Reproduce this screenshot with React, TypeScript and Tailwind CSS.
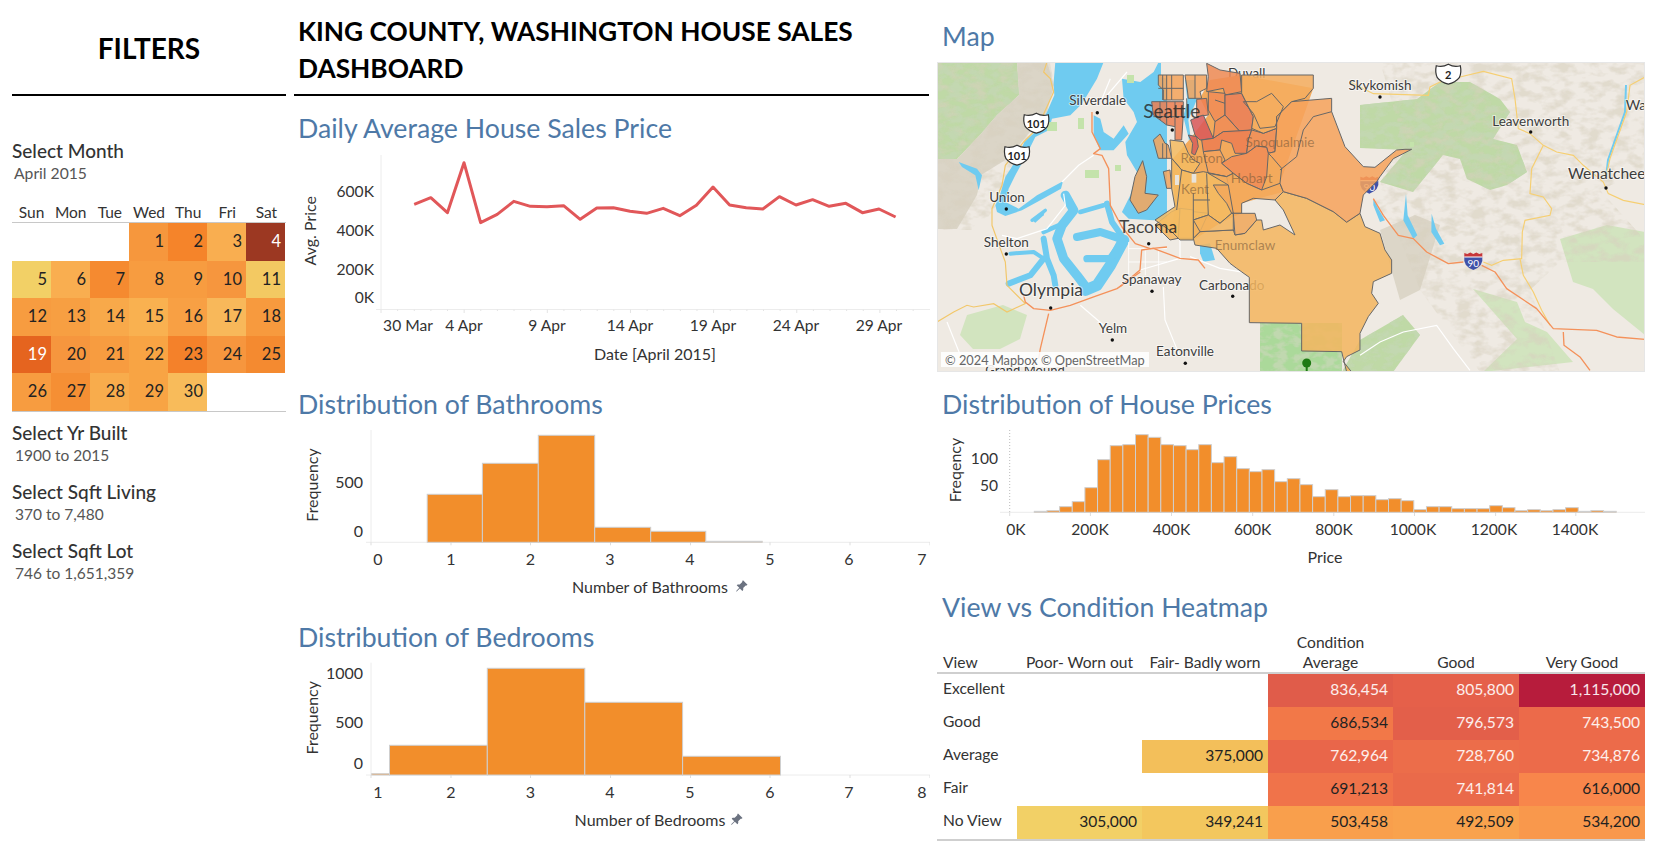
import { BsPinAngleFill } from "react-icons/bs";
import type { ReactNode } from "react";

const calendar = [
  [null, null, null, { d: 1, c: "bg-[#f6973d]" }, { d: 2, c: "bg-[#f5842a]" }, { d: 3, c: "bg-[#f9ae50]" }, { d: 4, c: "bg-[#9c3822] text-white" }],
  [{ d: 5, c: "bg-[#f2d066]" }, { d: 6, c: "bg-[#f9ae50]" }, { d: 7, c: "bg-[#f58a30]" }, { d: 8, c: "bg-[#f79c40]" }, { d: 9, c: "bg-[#f79c40]" }, { d: 10, c: "bg-[#f6963e]" }, { d: 11, c: "bg-[#f3c962]" }],
  [{ d: 12, c: "bg-[#f79c40]" }, { d: 13, c: "bg-[#f79f42]" }, { d: 14, c: "bg-[#f8a94a]" }, { d: 15, c: "bg-[#f9b150]" }, { d: 16, c: "bg-[#f8a044]" }, { d: 17, c: "bg-[#f8b85a]" }, { d: 18, c: "bg-[#f79a3e]" }],
  [{ d: 19, c: "bg-[#e5641f] text-white" }, { d: 20, c: "bg-[#f6963e]" }, { d: 21, c: "bg-[#f79c40]" }, { d: 22, c: "bg-[#f8a444]" }, { d: 23, c: "bg-[#f4812a]" }, { d: 24, c: "bg-[#f6963e]" }, { d: 25, c: "bg-[#f48a30]" }],
  [{ d: 26, c: "bg-[#f79c40]" }, { d: 27, c: "bg-[#f58f34]" }, { d: 28, c: "bg-[#f8ac4c]" }, { d: 29, c: "bg-[#f8a444]" }, { d: 30, c: "bg-[#f8bb5a]" }, null, null],
];

const heatRows = [
  { label: "Excellent", cells: [null, null, { v: "836,454", c: "bg-[#e05c4a] text-white/90" }, { v: "805,800", c: "bg-[#e5604a] text-white/90" }, { v: "1,115,000", c: "bg-[#b71c3c] text-white/90" }] },
  { label: "Good", cells: [null, null, { v: "686,534", c: "bg-[#f27848]" }, { v: "796,573", c: "bg-[#e35f4a] text-white/90" }, { v: "743,500", c: "bg-[#ec6a4a] text-white/90" }] },
  { label: "Average", cells: [null, { v: "375,000", c: "bg-[#f3bf5a]" }, { v: "762,964", c: "bg-[#e9664a] text-white/90" }, { v: "728,760", c: "bg-[#ec6d4a] text-white/90" }, { v: "734,876", c: "bg-[#ec6b4a] text-white/90" }] },
  { label: "Fair", cells: [null, null, { v: "691,213", c: "bg-[#f0734a]" }, { v: "741,814", c: "bg-[#ea6a4a] text-white/90" }, { v: "616,000", c: "bg-[#f8864b]" }] },
  { label: "No View", cells: [{ v: "305,000", c: "bg-[#f2d066]" }, { v: "349,241", c: "bg-[#f3c75e]" }, { v: "503,458", c: "bg-[#f99f4c]" }, { v: "492,509", c: "bg-[#f9a24d]" }, { v: "534,200", c: "bg-[#f9984c]" }] },
];

const priceLine = [313, 293, 338, 188, 368, 343, 304, 319, 320, 317, 358, 324, 323, 334, 340, 325, 347, 316, 261, 315, 323, 327, 290, 315, 299, 319, 310, 338, 327, 351];

const priceBins = [394, 392, 380, 365, 323, 239, 197, 194, 164, 172, 194, 197, 209, 194, 248, 230, 266, 275, 269, 305, 296, 314, 350, 329, 350, 347, 347, 359, 356, 362, 389, 380, 380, 386, 386, 386, 377, 383, 392, 389, 392, 389, 383, 394, 392, 394];

function Title({ children }: { children: ReactNode }) {
  return <div className="h-[32px] leading-[32px] text-[26.7px] text-[#4e79a7] whitespace-nowrap">{children}</div>;
}

function T({ x, y, children, anchor = "middle", size = 15.6, fill = "#333", rotate = false }: { x: number; y: number; children: ReactNode; anchor?: "start" | "middle" | "end"; size?: number; fill?: string; rotate?: boolean }) {
  const tx = rotate ? x - 1.5 : x;
  const ty = rotate ? y : y - 1.5;
  return (
    <text x={tx} y={ty} textAnchor={anchor} dominantBaseline="central" fontSize={size} fill={fill} transform={rotate ? `rotate(-90 ${tx} ${ty})` : undefined}>
      {children}
    </text>
  );
}

function FilterBlock({ name, value }: { name: string; value: string }) {
  return (
    <div className="h-[59px]">
      <div className="h-[22px] leading-[22px] text-[19px] font-medium text-[#333]">{name}</div>
      <div className="h-[22px] leading-[22px] text-[15.5px] text-[#555] pl-[3px]">{value}</div>
    </div>
  );
}

function Bar({ x1, x2, top, bottom }: { x1: number; x2: number; top: number; bottom: number }) {
  return <rect x={x1} y={top} width={x2 - x1} height={bottom - top} fill="#f28e2b" stroke="#cfcfcf" strokeWidth={1} />;
}

function Histogram({ y0, y1, edges, tops, xLabels, yLabels, name, nameX, pinX, nameY, labelY, freqY }: { y0: number; y1: number; edges: number[]; tops: number[]; xLabels: [string, number, number][]; yLabels: [string, number][]; name: string; nameX: number; pinX: number; nameY: number; labelY: number; freqY: number }) {
  return (
    <>
      <line x1={371} x2={371} y1={y0} y2={y1} stroke="#ececec" />
      <line x1={366} x2={930} y1={y1} y2={y1} stroke="#ececec" />
      {xLabels.map(([l, lx, tx]) => (
        <g key={l}>
          <line x1={tx} x2={tx} y1={y1} y2={y1 + 3} stroke="#ddd" />
          <T x={lx} y={labelY} size={16}>{l}</T>
        </g>
      ))}
      {yLabels.map(([l, ly]) => (
        <T key={l} x={363} y={ly} anchor="end" size={16}>{l}</T>
      ))}
      {tops.map((t, i) => (
        <Bar key={i} x1={edges[i]} x2={edges[i + 1]} top={t} bottom={y1} />
      ))}
      <T x={313} y={freqY} rotate size={16}>Frequency</T>
      <T x={nameX} y={nameY} size={16}>{name}</T>
      <BsPinAngleFill x={pinX} y={nameY - 8} size={13} className="text-[#6b7280]" />
    </>
  );
}

function Shield({ x, y, label }: { x: number; y: number; label: string }) {
  return (
    <g>
      <path d={`M${x - 12} ${y - 8} q6 2 12 -1.5 q6 3.5 12 1.5 q1.5 7 -1 12 q-4 5 -11 6.5 q-7 -1.5 -11 -6.5 q-2.5 -5 -1 -12z`} fill="#fff" stroke="#333" strokeWidth={1.2} />
      <text x={x} y={y + 1} textAnchor="middle" dominantBaseline="central" fontSize={11} fontWeight={700} fill="#222">{label}</text>
    </g>
  );
}

function Interstate({ x, y }: { x: number; y: number }) {
  return (
    <g>
      <path d={`M${x - 9} ${y - 4} h18 q1.5 9 -9 13 q-10.5 -4 -9 -13z`} fill="#3f51a8" />
      <path d={`M${x - 9} ${y - 4} v-4 l3 1 l3 -1.5 l3 1.5 l3 -1.5 l3 1.5 l3 -1 v4z`} fill="#c6363a" />
      <line x1={x - 9} x2={x + 9} y1={y - 4} y2={y - 4} stroke="#fff" />
      <text x={x} y={y + 2} textAnchor="middle" dominantBaseline="central" fontSize={10} fill="#fff">90</text>
    </g>
  );
}

function MapLabel({ x, y, children, size = 13.5 }: { x: number; y: number; children: ReactNode; size?: number }) {
  return (
    <text x={x} y={y} textAnchor="middle" dominantBaseline="central" fontSize={size} fill="#3d3d3d" stroke="#fff" strokeWidth={2} strokeOpacity={0.55} paintOrder="stroke">
      {children}
    </text>
  );
}

// labels that sit under the county shading in the picture, so they read faint
function FaintLabel({ x, y, children }: { x: number; y: number; children: ReactNode }) {
  return (
    <text x={x} y={y} textAnchor="middle" dominantBaseline="central" fontSize={13.5} fill="#7a5a3a" fillOpacity={0.6}>
      {children}
    </text>
  );
}

const westGroup = "translate(937 62) scale(0.3333)";
const northGroup = "translate(1100 60) scale(0.3333)";
const southGroup = "translate(1120 170) scale(0.3333)";
const eastGroup = "translate(1360 62) scale(0.3333)";

function MapPanel() {
  const dots = [[1097.3, 112.7], [1006.3, 209], [1006.3, 254], [1148.7, 243.7], [1050.7, 308], [1112.3, 340], [1152, 291.3], [1232.7, 296.3], [1185.3, 363.3], [1380, 97], [1530.7, 132], [1606, 188], [1172.3, 130], [1199.3, 170.7]];
  return (
    <svg viewBox="937 62 708 310" className="block w-[708px] h-[310px]">
      <defs>
        <filter id="tan" x="0" y="0" width="100%" height="100%">
          <feTurbulence type="fractalNoise" baseFrequency="0.07 0.11" numOctaves="3" seed="11" />
          <feColorMatrix values="0 0 0 0 0.68 0 0 0 0 0.63 0 0 0 0 0.52 3.4 0 0 0 -1.45" />
        </filter>
        <filter id="ridge" x="0" y="0" width="100%" height="100%">
          <feTurbulence type="fractalNoise" baseFrequency="0.08 0.13" numOctaves="3" seed="4" />
          <feColorMatrix values="0 0 0 0 0.55 0 0 0 0 0.68 0 0 0 0 0.45 4.5 0 0 0 -1.95" />
        </filter>
        <clipPath id="rough">
          <polygon points="937,62 1050,62 1055,90 1030,145 1006,190 980,230 937,230" />
          <polygon points="1380,62 1645,62 1645,170 1600,190 1645,240 1645,262 1560,262 1530,290 1560,372 1480,372 1420,290 1400,240 1375,200 1400,130" />
        </clipPath>
        <clipPath id="forest">
          <polygon points="937,62 1017,62 1019,95 997,115 980,135 957,159 937,159" />
          <polygon points="1360,105 1417,99 1440,82 1470,82 1500,99 1510,112 1493,139 1517,145 1527,172 1507,185 1490,190 1467,179 1460,159 1443,155 1413,192 1380,182 1407,150 1360,148" />
          <polygon points="1342,372 1360,340 1403,315 1420,335 1393,372" />
          <polygon points="1260,323 1342,323 1342,372 1260,372" />
        </clipPath>
      </defs>
      <rect x={937} y={62} width={708} height={310} fill="#efeae3" />
      <g fill="#bfd9a6">
        <polygon points="937,62 1017,62 1019,95 997,115 980,135 957,159 937,159" />
        <polygon points="1360,105 1417,99 1440,82 1470,82 1500,99 1510,112 1493,139 1517,145 1527,172 1507,185 1490,190 1467,179 1460,159 1443,155 1413,192 1380,182 1407,150 1360,148" />
      </g>
      <g fill="#d2e4bf">
        <polygon points="967,315 1003,305 1027,315 1020,339 1000,349 973,349 960,335" />
        <polygon points="1473,289 1517,302 1525,322 1547,332 1573,362 1483,372 1517,339" />
        <polygon points="1560,239 1607,225 1645,232 1645,335 1613,309 1593,289 1573,282" />
      </g>
      <polygon points="1342,372 1360,340 1403,315 1420,335 1393,372" fill="#bfd9a6" />
      <polygon points="1260,323 1342,323 1342,372 1260,372" fill="#abd99a" />
      <polygon points="1380,230 1415,215 1440,225 1420,290 1400,300" fill="#dcd6c8" />
      <polygon points="1017,62 1047,62 1054,85 1047,112 1024,139 1007,159 981,175 977,195 957,229 937,229 937,159 957,159 980,135 997,115 1019,95" fill="#dbd5c7" />
      <rect x={937} y={62} width={708} height={310} filter="url(#tan)" clipPath="url(#rough)" opacity={0.6} />
      <rect x={937} y={62} width={708} height={310} filter="url(#ridge)" clipPath="url(#forest)" opacity={0.85} />

      {/* water */}
      <g fill="#6fcbf0">
        <g transform={westGroup}>
          <path d="M355 0 L500 0 L480 50 L435 125 L400 160 L345 170 L335 205 L295 225 L270 275 L235 340 L215 380 L205 420 L245 440 L300 400 L378 358 L372 380 L310 415 L255 445 L205 462 L180 450 L175 430 L190 395 L205 345 L240 290 L262 240 L300 205 L330 150 L352 100 L350 60 Z" />
          <polygon points="470,160 490,170 500,210 530,230 560,190 575,215 530,265 490,265 470,220" />
          <polygon points="555,50 610,60 650,30 665,0 672,0 672,45 690,50 690,470 650,475 575,470 555,450 580,400 600,330 570,280 565,240 600,180 590,150 560,110" />
          <polygon points="65,300 120,320 135,340 125,385 115,340 75,315" />
          <polygon points="285,475 325,445 320,460 295,482" />
        </g>
        <g transform={southGroup}>
          <polygon points="240,225 270,220 285,270 250,275 240,250" />
        </g>
        <g transform={eastGroup}>
          <polygon points="138,395 143,460 172,520 160,530 130,475" />
          <polygon points="215,455 228,500 253,545 240,550 214,510" />
          <polygon points="40,410 55,440 75,475 60,480 40,430" />
        </g>
      </g>
      <g fill="none" stroke="#6fcbf0" strokeLinecap="round" strokeLinejoin="round" transform={westGroup}>
        <path d="M560 535 L520 610 L480 670 L445 685" strokeWidth={34} />
        <path d="M510 425 L525 480 L560 530" strokeWidth={18} />
        <path d="M385 400 L410 445 L375 490 L360 530 L380 590 L420 640 L450 680" strokeWidth={28} />
        <path d="M320 510 L365 490" strokeWidth={14} />
        <path d="M320 530 L330 590 L350 640 L355 670" strokeWidth={18} />
        <path d="M220 575 L290 570 L320 590" strokeWidth={12} />
        <path d="M215 665 L280 640 L320 590" strokeWidth={18} />
        <path d="M420 525 L490 510 L550 530" strokeWidth={24} />
        <path d="M450 590 L520 590 L555 540" strokeWidth={22} />
        <path d="M430 450 L500 430" strokeWidth={14} />
        <path d="M285 475 L325 445" strokeWidth={10} />
      </g>
      <g fill="#6fcbf0" transform={northGroup}>
        <polygon points="255,60 285,60 290,120 265,180 272,235 300,310 280,320 265,230 250,170 262,120" />
      </g>
      <g fill="none" stroke="#6fcbf0" strokeWidth={2}>
        <path d="M1626 85 L1625 112 L1608 160 L1606 178" />
      </g>

      {/* green patches */}
      <g fill="#c4e3ab">
        <rect x={1047} y={122} width={10} height={9} />
        <rect x={1078} y={118} width={6} height={11} />
        <rect x={1085} y={170} width={14} height={8} />
        <rect x={1127} y={75} width={7} height={8} />
        <rect x={1115} y={165} width={6} height={6} />
        <rect x={1410} y={142} width={4} height={5} />
      </g>

      {/* roads */}
      <g fill="none" stroke="#fff" strokeWidth={3.5} transform={westGroup}>
        <path d="M375 360 L425 310 L470 280 M380 395 L385 430 L330 500 L240 530 L195 520 M510 100 L570 30" />
        <path d="M30 780 L70 880" />
        <path d="M575 560 L690 560 M575 600 L690 600 M575 540 L575 640 M625 560 L625 640 M665 560 L665 640" strokeWidth={2.5} />
        <path d="M430 730 L500 790 M520 50 L495 110" />
      </g>
      <g fill="none" stroke="#fff" strokeWidth={3.5} transform={southGroup}>
        <path d="M130 350 L135 450 L180 560 M210 260 L300 295 L390 310 M180 210 L180 270 M60 300 L180 265" />
      </g>
      <g fill="none" stroke="#fff" strokeWidth={3.5} transform={eastGroup}>
        <path d="M0 880 L60 840 L130 810 L230 790 L280 860 L330 925" />
      </g>
      <g fill="none" stroke="#f2c76a" strokeWidth={3.5} transform={westGroup}>
        <path d="M0 780 L50 750 L90 730 L110 735 L170 725 L210 750 L265 725 L210 670 L205 600 L190 560 L165 490 L165 440 L195 370 L205 310 L260 240 L300 200 L350 90 L340 50 L320 30 L330 0" />
      </g>
      <g fill="none" stroke="#f6cf72" strokeWidth={3.5} transform={eastGroup}>
        <path d="M-30 60 L40 95 L205 100 L210 75 L240 60 L300 45 L370 28 L455 50 L465 110 L475 200 L510 215 L550 250 L590 270 L640 280 L670 310 L730 360 L745 395 L790 415 L855 428" />
        <path d="M550 250 L515 320 L510 395 L550 405 L575 440 L570 460 L495 475 L487 510 L485 590 L430 595 L395 610 L370 600" />
        <path d="M480 590 L490 640 L520 690 L545 745 L570 790" />
        <path d="M855 45 L810 70 L800 150 L750 290 L738 345" />
      </g>
      <g fill="none" stroke="#f4915a" strokeWidth={4} strokeLinejoin="round" transform={westGroup}>
        <path d="M465 150 L465 210 L490 260 L470 275 L495 280 L515 320 L520 430 L555 495 L595 545 L640 560 L690 555" />
        <path d="M610 630 L540 680 L470 705 L400 730 L340 745 L290 740 L265 720 L260 700" />
        <path d="M335 755 L310 860 L305 890" />
      </g>
      <g fill="none" stroke="#f4915a" strokeWidth={4} strokeLinejoin="round" transform={southGroup}>
        <path d="M0 350 L60 300 L65 240 L100 235 L180 265 L235 270 L255 295" />
      </g>
      <g fill="none" stroke="#f4915a" strokeWidth={4} strokeLinejoin="round" transform={eastGroup}>
        <path d="M40 410 L70 460 L115 520 L160 530 L200 570 L265 605 L310 600" />
        <path d="M365 610 L405 630 L440 680 L530 740 L580 800 L710 805 L770 825 L855 832" />
        <path d="M610 810 L612 850 L660 885 L690 925" />
      </g>

      {dots.map(([x, y], i) => (
        <circle key={i} cx={x} cy={y} r={1.7} fill="#111" />
      ))}
      <MapLabel x={1097.7} y={100}>Silverdale</MapLabel>
      <MapLabel x={1246.7} y={73.3}>Duvall</MapLabel>
      <MapLabel x={1380} y={84.7}>Skykomish</MapLabel>
      <MapLabel x={1530.7} y={120.7}>Leavenworth</MapLabel>
      <MapLabel x={1606.7} y={173} size={15.5}>Wenatchee</MapLabel>
      <MapLabel x={1636} y={104} size={14}>Wa</MapLabel>
      <MapLabel x={1007} y={197}>Union</MapLabel>
      <MapLabel x={1006.3} y={242}>Shelton</MapLabel>
      <MapLabel x={1051} y={289.3} size={17.5}>Olympia</MapLabel>
      <MapLabel x={1113} y={328}>Yelm</MapLabel>
      <MapLabel x={1151.7} y={279}>Spanaway</MapLabel>
      <MapLabel x={1231.7} y={284.7}>Carbonado</MapLabel>
      <MapLabel x={1185} y={351}>Eatonville</MapLabel>
      <MapLabel x={1025} y={370} size={13}>Grand Mound</MapLabel>
      <Shield x={1036.3} y={122.7} label="101" />
      <Shield x={1017} y={154.7} label="101" />
      <Shield x={1448.3} y={73.7} label="2" />
      <Interstate x={1369.3} y={184.7} />
      <Interstate x={1473.3} y={261} />

      {/* county tracts */}
      <g stroke="#666" strokeWidth={3} strokeLinejoin="round" fillOpacity={0.86}>
        <g transform={northGroup}>
          <polygon fill="#f3aa5c" stroke="none" fillOpacity={1} points="300,115 330,60 425,45 640,85 540,370 550,395 425,430 425,460 400,470 360,490 280,540 240,540 215,515 225,440 215,300 272,235 325,165" />
        </g>
        <g transform={southGroup}>
          <polygon fill="#f3b65f" points="490,65 560,85 640,125 680,155 720,130 735,170 780,190 795,240 815,270 815,310 760,335 755,370 775,400 745,440 720,490 720,540 680,560 670,575 695,606 680,606 665,545 545,543 545,460 388,458 388,322 350,295 330,280 290,235 225,225 220,205 240,185 340,180 345,195 375,190 410,150 425,150 430,180 480,165 525,195 490,120 465,90" />
          <polygon fill="#f3b660" points="105,165 155,125 180,115 175,205 150,210" />
          <polygon fill="#f4bd62" points="180,115 220,120 220,205 175,205" />
          <polygon fill="#f3b45e" points="220,125 265,130 240,185 220,205" />
        </g>
        <g transform={northGroup}>
          <polygon fill="#f3a45c" points="175,45 250,45 250,120 215,120 190,120 190,90 175,75" />
          <polygon fill="#f5a55e" points="255,45 320,45 320,85 300,95 305,115 265,115 262,90" />
          <polygon fill="#ec7f52" points="155,125 250,125 250,165 245,240 225,240 225,200 200,195 160,165" />
          <polygon fill="#ee7f52" points="290,118 320,115 325,165 290,170" />
          <polygon fill="#d9585a" points="272,180 310,165 340,235 300,240 285,225" />
          <polygon fill="#d9605a" points="265,225 290,230 295,260 285,285 275,280 278,250" />
          <polygon fill="#ef8c56" points="320,10 360,30 420,40 425,95 375,105 370,85 320,95 325,50" />
          <polygon fill="#f08c56" points="325,95 375,100 375,165 345,185 325,150" />
          <polygon fill="#e97f58" points="375,105 425,100 460,170 455,210 420,215 375,165" />
          <polygon fill="#ef8c56" points="345,185 375,165 420,215 370,215 340,235" />
          <polygon fill="#ec7e52" points="305,240 340,235 370,215 455,210 445,240 440,280 405,280 395,250 365,240 360,270 310,275" />
          <polygon fill="#ef8f5a" points="455,210 490,220 530,205 525,275 505,280 500,262 470,258 440,280 445,240" />
          <polygon fill="#f08c56" points="365,310 395,290 440,280 470,258 500,262 505,280 500,350 485,390 440,370 400,340" />
          <polygon fill="#f4a35d" points="310,275 360,270 375,300 365,310 400,340 380,350 325,340" />
          <polygon fill="#f3a45c" points="160,240 180,222 195,250 205,255 215,295 175,295" />
          <polygon fill="#f3bb62" points="210,240 250,245 265,280 280,300 300,310 280,340 245,330 215,295" />
          <polygon fill="#f3a45c" points="190,335 210,330 215,385 200,385" />
          <polygon fill="#f3bb62" points="215,295 245,330 280,340 310,335 380,350 385,375 340,375 355,400 380,430 395,460 360,490 325,465 280,480 280,540 240,540 215,515 165,480 225,440 215,385" />
          <polygon fill="#f3aa5c" points="325,340 380,350 400,340 440,370 485,390 540,370 550,395 525,420 460,415 425,430 425,460 400,460 385,375" />
          <polygon fill="#f3b45e" points="325,465 360,490 395,460 400,460 400,510 300,515 280,480" />
          <polygon fill="#f0a65a" points="395,460 465,460 470,480 435,520 405,525 400,460" />
          <polygon fill="#f4ae5f" points="425,45 640,45 640,85 615,115 575,125 530,170 530,205 490,220 455,205 460,170 425,100" />
          <polygon fill="#f6a35c" points="530,205 530,170 575,125 695,115 695,155 735,260 790,320 825,322 890,270 915,268 935,268 880,296 840,350 830,365 790,405 780,460 740,487 700,455 620,415 550,395 540,370 545,325 515,290 505,280 525,275" />
          <polygon fill="#f3a55c" points="128,302 140,350 135,400 175,405 140,450 115,460 90,420 105,350" />
          <g fill="none">
            <path d="M188 45 V120 M200 45 V120 M215 45 V120 M285 45 V115 M175 85 H250 M180 125 V180 M200 125 V195 M225 125 V200 M160 170 H250" />
            <path d="M695 155 L640 170 L610 210 L590 290 L540 330" />
            <path d="M188 250 V295 M200 250 V295 M245 330 L230 450 M280 400 V480 M280 420 H330 M320 340 L325 465" />
            <path d="M430 125 L470 125 L515 100 L550 140 L525 200 L480 205 L460 160 L430 125" />
            <path d="M260 115 L262 175 M345 120 L375 130" />
          </g>
          <g fill="#e8e4dc" stroke="none" fillOpacity={1}>
            <rect x={225} y={345} width={12} height={30} />
            <rect x={275} y={342} width={14} height={26} />
          </g>
        </g>
      </g>
      <FaintLabel x={1245} y={245}>Enumclaw</FaintLabel>
      <FaintLabel x={1251.7} y={178}>Hobart</FaintLabel>
      <FaintLabel x={1201.7} y={158}>Renton</FaintLabel>
      <FaintLabel x={1195} y={189}>Kent</FaintLabel>
      <FaintLabel x={1280} y={142}>Snoqualmie</FaintLabel>
      <text x={1171.7} y={110} textAnchor="middle" dominantBaseline="central" fontSize={19} fill="#222" fillOpacity={0.8}>Seattle</text>
      <text x={1148} y={226} textAnchor="middle" dominantBaseline="central" fontSize={17.5} fill="#222" fillOpacity={0.85}>Tacoma</text>
      <g>
        <circle cx={1306.7} cy={363} r={4.5} fill="#1f7a14" />
        <rect x={1305.7} y={365} width={2} height={7} fill="#1f7a14" />
      </g>
      <rect x={941} y={352} width={208} height={15} fill="#fff" fillOpacity={0.88} />
      <text x={945} y={359.5} dominantBaseline="central" fontSize={12.8} fill="#666">© 2024 Mapbox © OpenStreetMap</text>
      <rect x={937.5} y={62.5} width={707} height={309} fill="none" stroke="#e6e6e6" />
    </svg>
  );
}

export default function App() {
  const xBath: [string, number, number][] = [["0", 378, 371], ["1", 451, 451], ["2", 530.5, 530.5], ["3", 610, 610.5], ["4", 690, 690.5], ["5", 770, 770], ["6", 849, 850], ["7", 922, 930]];
  const xBed: [string, number, number][] = [["1", 378, 371], ["2", 451, 451], ["3", 530.5, 530.5], ["4", 610, 610.5], ["5", 690, 690.5], ["6", 770, 770], ["7", 849, 850], ["8", 922, 930]];

  return (
    <div className="flex w-[1657px] h-[851px] overflow-hidden bg-white font-[Lato,'Noto_Sans',sans-serif] text-[#333]">
      {/* filters */}
      <div className="ml-[12px] w-[274px] flex flex-col">
        <div className="h-[96px] border-b-2 border-black flex items-center justify-center pt-[2px]">
          <span className="text-[28px] font-bold text-black">FILTERS</span>
        </div>
        <div className="mt-[44px] h-[22px] leading-[22px] text-[19px] font-medium">Select Month</div>
        <div className="h-[23px] leading-[23px] text-[15.7px] text-[#555] pl-[2px]">April 2015</div>
        <div className="mt-[15px] h-[23px] pt-[2px] grid grid-cols-7 border-b border-[#c8c8c8] text-[15.5px] text-center leading-[20px] w-[274px]">
          {["Sun", "Mon", "Tue", "Wed", "Thu", "Fri", "Sat"].map((d) => (
            <div key={d}>{d}</div>
          ))}
        </div>
        <div className="grid grid-cols-[repeat(7,39px)] auto-rows-[37.5px] border-b border-[#c8c8c8] text-[16.5px] text-[#222]">
          {calendar.flat().map((cell, i) =>
            cell ? (
              <div key={i} className={`flex items-center justify-end pr-[4px] ${cell.c}`}>
                {cell.d}
              </div>
            ) : (
              <div key={i} />
            ),
          )}
        </div>
        <div className="mt-[10px]">
          <FilterBlock name="Select Yr Built" value="1900 to 2015" />
          <FilterBlock name="Select Sqft Living" value="370 to 7,480" />
          <FilterBlock name="Select Sqft Lot" value="746 to 1,651,359" />
        </div>
      </div>

      {/* middle */}
      <div className="ml-[8px] w-[635px] mr-[1px] flex flex-col">
        <div className="h-[96px] border-b-2 border-black pl-[4px] pt-[13px] text-[26.3px] leading-[37px] font-bold text-black">
          KING COUNTY, WASHINGTON HOUSE SALES
          <br />
          DASHBOARD
        </div>
        <div className="mt-[16px] pl-[4px]">
          <Title>Daily Average House Sales Price</Title>
        </div>
        <svg viewBox="294 144 636 226" className="block w-[636px] h-[226px] shrink-0">
          <line x1={381} x2={381} y1={155} y2={309.5} stroke="#ececec" />
          <line x1={376} x2={930} y1={309.5} y2={309.5} stroke="#ececec" />
          {Array.from({ length: 33 }, (_, i) => (
            <line key={i} x1={381 + i * 16.63} x2={381 + i * 16.63} y1={309.5} y2={i % 5 === 0 ? 313 : 311} stroke="#e4e4e4" />
          ))}
          <polyline
            points={priceLine.map((Y, i) => `${414.2 + i * 16.6},${100 + Y / 3}`).join(" ")}
            fill="none"
            stroke="#e15759"
            strokeWidth={3}
            strokeLinejoin="round"
          />
          <T x={374} y={192.7} anchor="end">600K</T>
          <T x={374} y={231.7} anchor="end">400K</T>
          <T x={374} y={270.7} anchor="end">200K</T>
          <T x={374} y={298.7} anchor="end">0K</T>
          <T x={311.5} y={230.7} rotate size={16}>Avg. Price</T>
          <T x={408} y={326.7}>30 Mar</T>
          <T x={464} y={326.7}>4 Apr</T>
          <T x={547} y={326.7}>9 Apr</T>
          <T x={630} y={326.7}>14 Apr</T>
          <T x={713} y={326.7}>19 Apr</T>
          <T x={796} y={326.7}>24 Apr</T>
          <T x={879} y={326.7}>29 Apr</T>
          <T x={655} y={355} size={16}>Date [April 2015]</T>
        </svg>
        <div className="mt-[18px] pl-[4px]">
          <Title>Distribution of Bathrooms</Title>
        </div>
        <svg viewBox="294 420 636 180" className="block w-[636px] h-[180px] shrink-0">
          <Histogram
            y0={430}
            y1={542.3}
            edges={[427.2, 482.4, 538.3, 594.7, 650.7, 705.8, 762.2]}
            tops={[494.3, 463.3, 435.3, 527.3, 531.3, 541.3]}
            xLabels={xBath}
            yLabels={[["500", 482.7], ["0", 531.7]]}
            name="Number of Bathrooms"
            nameX={650}
            pinX={735}
            nameY={587.7}
            labelY={560}
            freqY={485}
          />
        </svg>
        <div className="mt-[21px] pl-[4px]">
          <Title>Distribution of Bedrooms</Title>
        </div>
        <svg viewBox="294 653 636 187" className="block w-[636px] h-[187px] shrink-0">
          <Histogram
            y0={662.7}
            y1={775}
            edges={[371.7, 389.5, 487.3, 584.8, 682.6, 780.5]}
            tops={[773.7, 745.3, 668.3, 702.3, 756.3]}
            xLabels={xBed}
            yLabels={[["1000", 674.3], ["500", 722.7], ["0", 764.3]]}
            name="Number of Bedrooms"
            nameX={650}
            pinX={730}
            nameY={821}
            labelY={793.3}
            freqY={717.7}
          />
        </svg>
      </div>

      {/* right */}
      <div className="ml-[7px] w-[708px] flex flex-col pt-[20px]">
        <div className="pl-[5px]">
          <Title>Map</Title>
        </div>
        <div className="mt-[10px]">
          <MapPanel />
        </div>
        <div className="mt-[16px] pl-[5px]">
          <Title>Distribution of House Prices</Title>
        </div>
        <svg viewBox="937 420 708 155" className="block w-[708px] h-[155px] shrink-0">
          <line x1={1009.7} x2={1009.7} y1={430} y2={512.3} stroke="#bbb" strokeDasharray="1 2" />
          <line x1={1000} x2={1645} y1={512.3} y2={512.3} stroke="#ececec" />
          {[1009.7, 1090.4, 1171.5, 1252.7, 1333.8, 1414.5, 1495.6, 1575.8].map((x) => (
            <line key={x} x1={x} x2={x} y1={512.3} y2={516} stroke="#ddd" />
          ))}
          {priceBins.map((Y, i) => (
            <Bar key={i} x1={1034.3 + i * 12.65} x2={1034.3 + (i + 1) * 12.65} top={380 + Y / 3} bottom={512.3} />
          ))}
          <T x={998} y={459} anchor="end">100</T>
          <T x={998} y={486} anchor="end">50</T>
          <T x={955.5} y={470} rotate size={16}>Freqency</T>
          <T x={1016} y={530}>0K</T>
          <T x={1090} y={530}>200K</T>
          <T x={1171.5} y={530}>400K</T>
          <T x={1252.7} y={530}>600K</T>
          <T x={1334} y={530}>800K</T>
          <T x={1413} y={530}>1000K</T>
          <T x={1494} y={530}>1200K</T>
          <T x={1575} y={530}>1400K</T>
          <T x={1325} y={557.7} size={16}>Price</T>
        </svg>
        <div className="mt-[16px] pl-[5px]">
          <Title>View vs Condition Heatmap</Title>
        </div>
        <div className="grid grid-cols-[80px_125px_126px_125px_126px_126px] h-[51px] border-b-2 border-[#cfcfcf] text-[15.6px] text-center items-end leading-[20px]">
          <div className="text-left pl-[6px]">View</div>
          <div>Poor- Worn out</div>
          <div>Fair- Badly worn</div>
          <div>
            Condition
            <br />
            Average
          </div>
          <div>Good</div>
          <div>Very Good</div>
        </div>
        <div className="grid grid-cols-[80px_125px_126px_125px_126px_126px] auto-rows-[33px] border-b-2 border-[#cfcfcf] text-[15.6px] text-[#222]">
          {heatRows.map((row) => (
            <div key={row.label} className="contents">
              <div className="flex items-center pl-[6px] pb-[3px] text-[#333]">{row.label}</div>
              {row.cells.map((cell, i) =>
                cell ? (
                  <div key={i} className={`flex items-center justify-end pr-[5px] pb-[2px] ${cell.c}`}>
                    {cell.v}
                  </div>
                ) : (
                  <div key={i} />
                ),
              )}
            </div>
          ))}
        </div>
      </div>
    </div>
  );
}
